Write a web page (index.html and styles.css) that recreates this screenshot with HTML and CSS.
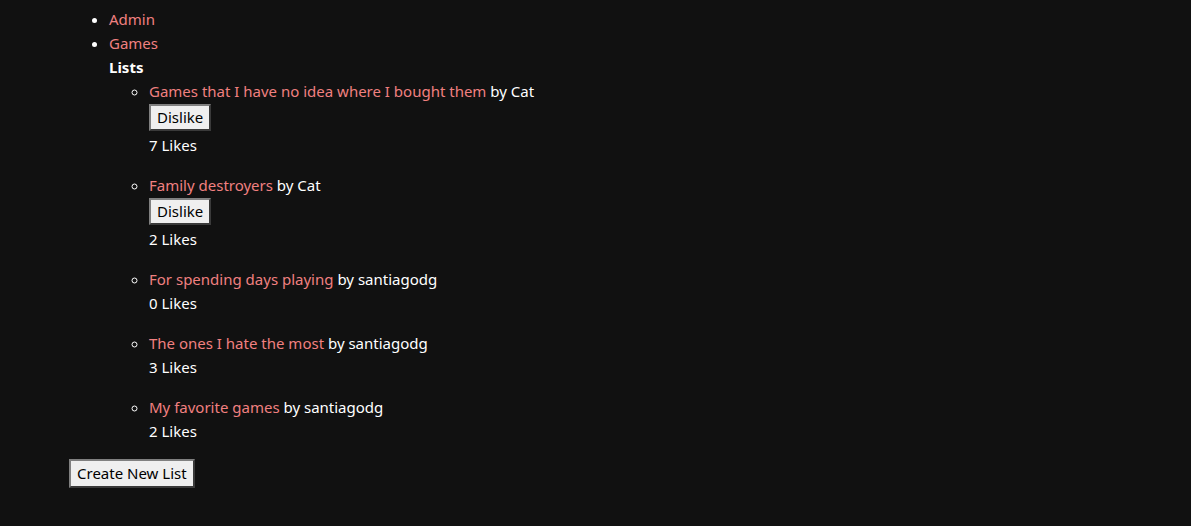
FILE: index.html
```html
<!DOCTYPE html>
<html>
<head>
<meta charset="utf-8">
<link rel="stylesheet" href="styles.css">
</head>
<body>
<div class="page">
  <ul class="nav">
    <li><a href="#">Admin</a></li>
    <li><a href="#">Games</a>
      <div class="heading">Lists</div>
      <ul class="lists">
        <li class="item">
          <div class="title"><a href="#">Games that I have no idea where I bought them</a> by Cat</div>
          <div class="actions"><button class="btn">Dislike</button></div>
          <div class="likes">7 Likes</div>
        </li>
        <li class="item">
          <div class="title"><a href="#">Family destroyers</a> by Cat</div>
          <div class="actions"><button class="btn">Dislike</button></div>
          <div class="likes">2 Likes</div>
        </li>
        <li class="item">
          <div class="title"><a href="#">For spending days playing</a> by santiagodg</div>
          <div class="likes">0 Likes</div>
        </li>
        <li class="item">
          <div class="title"><a href="#">The ones I hate the most</a> by santiagodg</div>
          <div class="likes">3 Likes</div>
        </li>
        <li class="item">
          <div class="title"><a href="#">My favorite games</a> by santiagodg</div>
          <div class="likes">2 Likes</div>
        </li>
      </ul>
    </li>
  </ul>
  <button class="btn create">Create New List</button>
</div>
</body>
</html>
```
FILE: styles.css
```css
html, body {
  margin: 0;
  background: #111111;
}
body {
  color: #ffffff;
  font-family: "Noto Sans", "Open Sans", sans-serif;
  font-size: 15px;
  line-height: 24px;
}
.page {
  padding: 7px 0 0 69px;
}
a {
  color: #f08080;
  text-decoration: none;
}
.nav {
  margin: 0;
  padding-left: 40px;
  list-style: disc;
}
.heading {
  font-weight: bold;
}
.lists {
  margin: 0;
  padding-left: 40px;
  list-style: circle;
}
.item {
  margin-bottom: 16px;
}
.actions {
  padding: 1px 0 2px;
  line-height: 0;
}
.btn {
  font-family: inherit;
  font-size: 15px;
  line-height: 21px;
  color: #000;
  background: #efefef;
  border: 2px solid;
  border-color: #808080 #3a3a3a #3a3a3a #808080;
  padding: 1px 6px;
  margin: 0;
}
.create {
  margin-top: 0;
  padding: 2px 6px;
}
```
